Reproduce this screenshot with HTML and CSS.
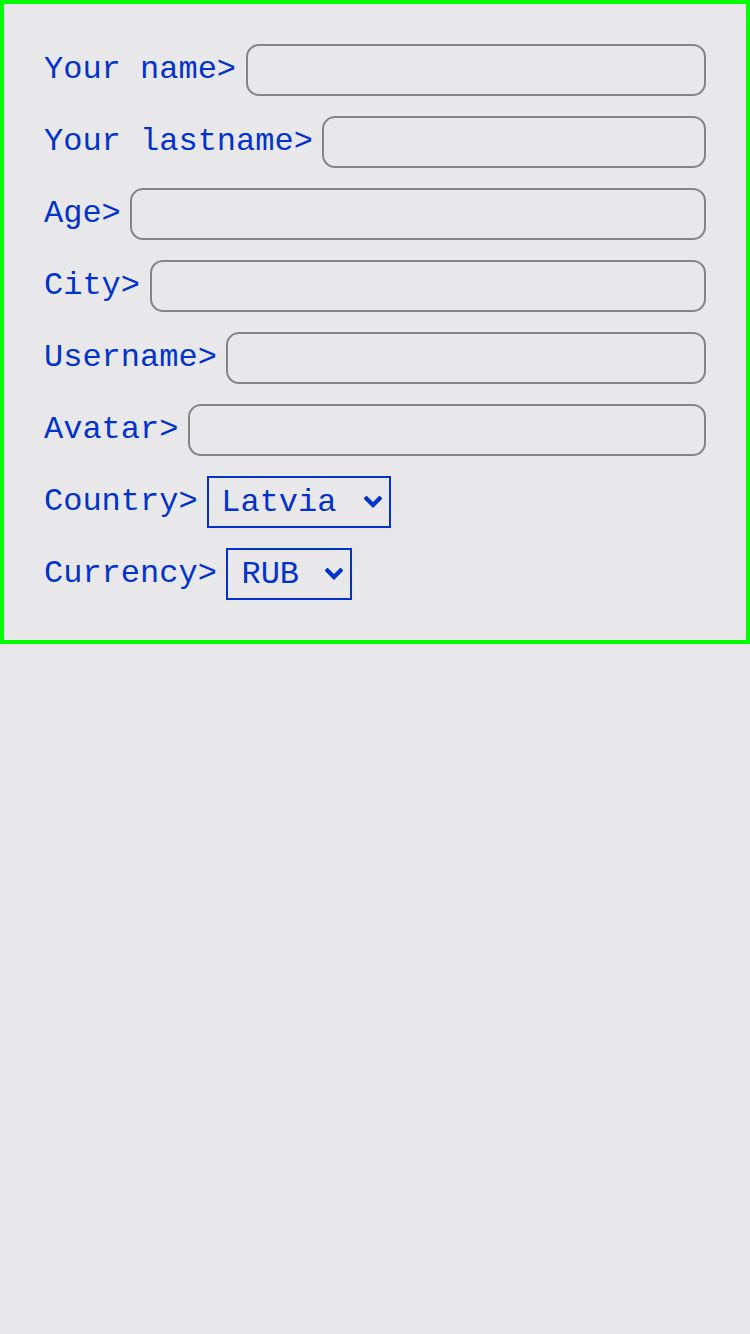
FILE: index.html
```html
<!DOCTYPE html>
<html lang="en">
<head>
<meta charset="utf-8">
<title>Form</title>
<link rel="stylesheet" href="styles.css">
</head>
<body>
<form class="form">
  <label class="row"><span class="label">Your name&gt;</span><input class="field" type="text"></label>
  <label class="row"><span class="label">Your lastname&gt;</span><input class="field" type="text"></label>
  <label class="row"><span class="label">Age&gt;</span><input class="field" type="text"></label>
  <label class="row"><span class="label">City&gt;</span><input class="field" type="text"></label>
  <label class="row"><span class="label">Username&gt;</span><input class="field" type="text"></label>
  <label class="row"><span class="label">Avatar&gt;</span><input class="field" type="text"></label>
  <label class="row"><span class="label">Country&gt;</span>
    <select class="choice choice-country">
      <option>Latvia</option>
      <option>Russia</option>
      <option>Norway</option>
    </select>
  </label>
  <label class="row"><span class="label">Currency&gt;</span>
    <select class="choice choice-currency">
      <option>RUB</option>
      <option>EUR</option>
      <option>USD</option>
    </select>
  </label>
</form>
</body>
</html>
```
FILE: styles.css
```css
html, body {
  margin: 0;
  padding: 0;
  background: #e8e8ea;
}
body {
  font-family: "Liberation Mono", monospace;
  min-height: 1334px;
}
.form {
  box-sizing: border-box;
  width: 750px;
  border: 4px solid #00ff00;
  padding: 40px;
  display: flex;
  flex-direction: column;
  gap: 20px;
}
.row {
  display: flex;
  align-items: center;
  gap: 9.6px;
  height: 52px;
}
.label {
  font-size: 32px;
  color: #0033cc;
  white-space: pre;
  line-height: 36px;
}
.field {
  flex: 1;
  min-width: 0;
  box-sizing: border-box;
  height: 52px;
  margin: 0;
  border: 2px solid #858585;
  border-radius: 13px;
  background: transparent;
  font-family: "Liberation Mono", monospace;
  font-size: 32px;
  color: #0033cc;
  padding: 0 12px;
  outline: none;
}
.choice {
  box-sizing: border-box;
  height: 52px;
  margin: 0;
  border: 2px solid #0033cc;
  border-radius: 0;
  background-color: transparent;
  -webkit-appearance: none;
  appearance: none;
  font-family: "Liberation Mono", monospace;
  font-size: 32px;
  color: #0033cc;
  padding: 0 40px 0 12px;
  background-image: url("data:image/svg+xml,%3Csvg xmlns='http://www.w3.org/2000/svg' width='18' height='12' viewBox='0 0 18 12'%3E%3Cpolyline points='2.5,2.5 9,9 15.5,2.5' fill='none' stroke='%230033cc' stroke-width='4.2' stroke-linecap='square' stroke-linejoin='miter'/%3E%3C/svg%3E");
  background-repeat: no-repeat;
  background-position: right 7px center;
  background-size: 18px 12px;
  outline: none;
}
.choice-country {
  width: 184px;
}
.choice-currency {
  width: 126px;
  padding-left: 13px;
}
```
